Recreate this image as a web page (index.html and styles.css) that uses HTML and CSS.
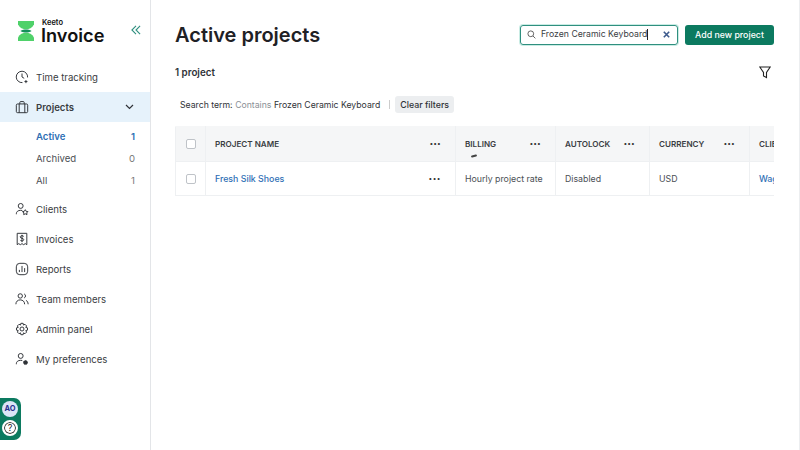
FILE: index.html
```html
<!DOCTYPE html>
<html lang="en">
<head>
  <meta charset="UTF-8" />
  <title>Active projects</title>
  <link rel="stylesheet" href="styles.css">
</head>
<body>

<div class="app">
  <aside class="sidebar">
    <div class="brand">
      <svg class="brand-mark" width="16" height="20" viewBox="0 0 17 20" preserveAspectRatio="none">
        <path d="M0 0h17v3.500C15 7 12 8.200 8.500 8.200S2 7 0 3.500z" fill="#4fd16a"/>
        <path d="M0 20h17v-3.500C15 13 12 11.800 8.500 11.800S2 13 0 16.500z" fill="#4fd16a"/>
        <path d="M2.500 10C4.500 8.800 6.500 8.400 8.500 8.400s4 .4 6 1.600c-2 1.200-4 1.600-6 1.600s-4-.4-6-1.600z" fill="#13905a"/>
      </svg>
      <div class="brand-text">
        <span class="brand-small">Keeto</span>
        <span class="brand-name">Invoice</span>
      </div>
      <svg class="collapse" width="10" height="10" viewBox="0 0 11 11" fill="none" stroke="#2f8f7f" stroke-width="1.200">
        <path d="M5.500 1 1 5.500 5.500 10M10 1 5.500 5.500 10 10"/>
      </svg>
    </div>

    <nav class="nav">
      <a class="nav-item">
        <svg class="nav-icon" viewBox="0 0 16 16"><path d="M8.500 14.400A6.500 6.500 0 1 1 14.400 8.500M8 4v4l2.500 1.500M12.500 11.500v3.500M10.800 13.200h3.400"/></svg>
        Time tracking
      </a>
      <a class="nav-item nav-open">
        <svg class="nav-icon" viewBox="0 0 16 16"><rect x="1.500" y="4.500" width="13" height="10" rx="1.500"/><path d="M5.500 4.500V2.800a1 1 0 0 1 1-1h3a1 1 0 0 1 1 1v1.700M4.800 4.500v10M11.200 4.500v10"/></svg>
        Projects
        <svg class="chevron" width="9" height="6" viewBox="0 0 9 6"><path d="M1 1l3.500 3.500L8 1"/></svg>
      </a>
      <div class="subnav">
        <a class="sub-item sub-active">Active <span>1</span></a>
        <a class="sub-item">Archived <span>0</span></a>
        <a class="sub-item">All <span>1</span></a>
      </div>
      <a class="nav-item">
        <svg class="nav-icon" viewBox="0 0 16 16"><circle cx="6.500" cy="4.500" r="2.800"/><path d="M1.500 14v-.5c0-2.500 2-4 5-4 .7 0 1.300.1 1.800.2M11.800 8.800l1 1.900 2 .3-1.400 1.400.3 2-1.900-.9-1.900.9.300-2L8.500 11l2-.3z"/></svg>
        Clients
      </a>
      <a class="nav-item">
        <svg class="nav-icon" viewBox="0 0 16 16"><path d="M2.500 1.500h11v13l-1.800-1.200-1.800 1.200L8 13.300l-1.900 1.200-1.800-1.200-1.800 1.200zM10 5.200C9.600 4.500 9 4.200 8 4.200c-1.200 0-2 .6-2 1.500 0 2 4 1 4 3 0 .9-.8 1.500-2 1.500-1 0-1.700-.4-2-1.100M8 3.200v8.400"/></svg>
        Invoices
      </a>
      <a class="nav-item">
        <svg class="nav-icon" viewBox="0 0 16 16"><rect x="1.500" y="1.500" width="13" height="13" rx="4"/><path d="M5 11.500V9M8 11.500v-7M11 11.500V7"/></svg>
        Reports
      </a>
      <a class="nav-item">
        <svg class="nav-icon" viewBox="0 0 16 16"><circle cx="6" cy="4.500" r="2.500"/><path d="M1 14c0-3 2-5 5-5s5 2 5 5M10.500 2.200a2.500 2.500 0 0 1 0 4.600M12.500 9.500c1.500.7 2.500 2.300 2.500 4.500"/></svg>
        Team members
      </a>
      <a class="nav-item">
        <svg class="nav-icon" viewBox="0 0 16 16"><circle cx="8" cy="8" r="2.300"/><path d="M6.700 1.500h2.600l.4 2 1.700-.9 1.900 1.900-1 1.700 2 .5v2.600l-2 .5 1 1.700-1.900 1.900-1.700-1-.4 2.100H6.700l-.4-2.100-1.700 1-1.900-1.900 1-1.700-2-.5V6.700l2-.5-1-1.700 1.900-1.900 1.700.9z"/></svg>
        Admin panel
      </a>
      <a class="nav-item">
        <svg class="nav-icon" viewBox="0 0 16 16"><circle cx="6.500" cy="4.500" r="2.800"/><path d="M1.500 14v-.5c0-2.500 2-4 5-4 .7 0 1.300.1 1.800.2"/><circle class="icon-fill" cx="12" cy="12" r="2.300"/></svg>
        My preferences
      </a>
    </nav>

    <div class="floating">
      <span class="avatar">AO</span>
      <span class="help">?</span>
    </div>
  </aside>

  <main class="main">
    <header class="page-head">
      <h1>Active projects</h1>
      <div class="search">
        <svg width="9" height="9" viewBox="0 0 10 10" fill="none" stroke="#555" stroke-width="1"><circle cx="4.200" cy="4.200" r="3.200"/><path d="M6.700 6.700 9.300 9.300"/></svg>
        <span class="search-value">Frozen Ceramic Keyboard</span>
        <svg class="search-clear" width="7" height="7" viewBox="0 0 7 7" fill="none" stroke="#3d5a8c" stroke-width="1.600"><path d="M.8.800l5.400 5.400M6.200.800.8 6.200"/></svg>
      </div>
      <button class="add-btn">Add new project</button>
    </header>

    <div class="sub-head">
      <span class="count">1 project</span>
      <svg width="12" height="13" viewBox="0 0 12 13" fill="none" stroke="#222" stroke-width="1.100"><path d="M.8 1h10.400L7.500 6.500v5L4.500 10V6.500z"/></svg>
    </div>

    <div class="filters">
      <span>Search term:</span>
      <span class="muted">Contains</span>
      <span>Frozen Ceramic Keyboard</span>
      <span class="divider"></span>
      <button class="clear-btn">Clear filters</button>
    </div>

    <div class="table-wrap">
      <table class="projects">
        <colgroup>
          <col class="col-check"><col class="col-name"><col class="col-billing"><col class="col-lock"><col class="col-currency"><col class="col-client">
        </colgroup>
        <thead>
          <tr>
            <th><span class="checkbox"></span></th>
            <th><div class="th-inner">PROJECT NAME <span class="dots">•••</span></div></th>
            <th><div class="th-inner">BILLING <span class="dots">•••</span></div><span class="sort-mark"></span></th>
            <th><div class="th-inner">AUTOLOCK <span class="dots">•••</span></div></th>
            <th><div class="th-inner">CURRENCY <span class="dots">•••</span></div></th>
            <th><div class="th-inner">CLIENT</div></th>
          </tr>
        </thead>
        <tbody>
          <tr>
            <td><span class="checkbox"></span></td>
            <td><div class="th-inner"><a class="link">Fresh Silk Shoes</a> <span class="dots">•••</span></div></td>
            <td>Hourly project rate</td>
            <td>Disabled</td>
            <td>USD</td>
            <td><a class="link">Wagner Group</a></td>
          </tr>
        </tbody>
      </table>
    </div>
  </main>
</div>

</body>
</html>
```

FILE: styles.css
```css
* {
  box-sizing: border-box;
}
html, body {
  margin: 0;
  height: 100%;
  overflow: hidden;
}
body {
  font-family: Inter, "Liberation Sans", sans-serif;
  font-size: 9.600px;
  color: #2f3237;
  background: #fff;
}
.app {
  display: flex;
  height: 450px;
  border-right: 1px solid #eceef0;
}

/* sidebar */
.sidebar {
  position: relative;
  width: 151px;
  flex-shrink: 0;
  border-right: 1px solid #e3e5e8;
}
.brand {
  display: flex;
  align-items: center;
  height: 34px;
  margin-top: 14px;
  padding: 0 9px 0 18px;
}
.brand-mark {
  flex-shrink: 0;
}
.brand-text {
  display: flex;
  flex-direction: column;
  margin-left: 7px;
  color: #111;
}
.brand-small {
  font-size: 7.500px;
  font-weight: 600;
  line-height: 8px;
  margin-left: 1px;
}
.brand-name {
  font-size: 18.200px;
  font-weight: 600;
  line-height: 17px;
}
.collapse {
  margin-left: auto;
  margin-top: -2px;
}
.nav {
  margin-top: 14px;
}
.nav-item {
  display: flex;
  align-items: center;
  gap: 7px;
  height: 30px;
  padding: 0 14px 0 15px;
  color: #3a3d42;
}
.nav-icon {
  width: 14px;
  height: 14px;
  fill: none;
  stroke: #2f3237;
  stroke-width: 1.100;
  flex-shrink: 0;
}
.nav-icon .icon-fill {
  fill: #2f3237;
  stroke-dasharray: 1.200 0.600;
}
.nav-open {
  background: #e6f2fb;
  font-weight: 600;
}
.chevron {
  margin-left: auto;
  fill: none;
  stroke: #2f3237;
  stroke-width: 1.200;
  margin-right: 2px;
}
.subnav {
  padding: 3px 0;
}
.sub-item {
  display: flex;
  justify-content: space-between;
  align-items: center;
  height: 22px;
  padding: 0 15px 0 36px;
  color: #4b4f55;
}
.sub-item span {
  color: #777;
}
.sub-active,
.sub-active span {
  color: #2f6fb5;
  font-weight: 600;
}
.floating {
  position: absolute;
  left: 0;
  top: 398px;
  width: 21px;
  height: 42px;
  padding: 3px 0 0 2px;
  background: #0c7a60;
  border-radius: 0 7px 7px 0;
  display: flex;
  flex-direction: column;
  gap: 3px;
}
.avatar {
  width: 16px;
  height: 16px;
  border-radius: 50%;
  background: #dbe4f7;
  color: #27308f;
  font-size: 7.500px;
  font-weight: 700;
  line-height: 16px;
  text-align: center;
}
.help {
  width: 16px;
  height: 16px;
  border-radius: 50%;
  background: #fff;
  color: #222;
  font-size: 9px;
  line-height: 12px;
  text-align: center;
  border: 2px solid #fff;
  box-shadow: inset 0 0 0 1px #333;
}

/* main area */
.main {
  flex: 1;
  min-width: 0;
  padding: 0 25px 0 24px;
}
.page-head {
  display: flex;
  align-items: center;
  height: 34px;
  margin-top: 18px;
  gap: 7px;
}
.page-head h1 {
  margin: 0 auto 0 0;
  font-size: 20px;
  font-weight: 600;
  color: #1f2125;
}
.search {
  display: flex;
  align-items: center;
  width: 158px;
  height: 20px;
  padding: 0 7px 0 6px;
  margin-top: -1px;
  border: 1px solid #2f8f7f;
  border-radius: 3px;
  box-shadow: 0 0 0 1px #c9ece4;
  color: #3a3d42;
}
.search svg {
  flex-shrink: 0;
}
.search-value {
  margin-left: 5px;
  font-size: 8.700px;
  white-space: nowrap;
  border-right: 1px solid #222;
  line-height: 11px;
}
.search-clear {
  margin-left: auto;
}
.add-btn {
  width: 89px;
  height: 20px;
  margin-top: -1px;
  border: none;
  border-radius: 3px;
  background: #0c7a60;
  color: #fff;
  font-family: inherit;
  font-size: 8.800px;
  font-weight: 500;
  padding: 0;
}
.sub-head {
  display: flex;
  justify-content: space-between;
  align-items: center;
  height: 20px;
  margin-top: 10px;
  padding-right: 3px;
}
.count {
  font-weight: 600;
  font-size: 9.800px;
}
.filters {
  display: flex;
  align-items: center;
  gap: 2.500px;
  height: 17px;
  margin-top: 14px;
  padding-left: 5px;
  font-size: 8.700px;
}
.muted {
  color: #8b8f95;
}
.divider {
  width: 1px;
  height: 9px;
  background: #ccc;
  margin: 0 3px 0 6px;
}
.clear-btn {
  height: 17px;
  padding: 0 5px;
  border: none;
  border-radius: 3px;
  background: #eceef0;
  color: #2f3237;
  font-family: inherit;
  font-size: 8.800px;
  font-weight: 500;
}

/* table */
.table-wrap {
  margin-top: 13px;
  width: 599px;
  overflow: hidden;
}
.projects {
  border-collapse: collapse;
  table-layout: fixed;
  width: 680px;
  font-size: 8.800px;
}
.col-check { width: 30px; }
.col-name { width: 250px; }
.col-billing { width: 100px; }
.col-lock { width: 94px; }
.col-currency { width: 100px; }
.col-client { width: 106px; }
.projects th,
.projects td {
  border: 1px solid #eef0f2;
  padding: 0 10px 0 9px;
  text-align: left;
  white-space: nowrap;
}
.projects th {
  position: relative;
  height: 35px;
  background: #f5f6f7;
  font-size: 8.100px;
  font-weight: 600;
  color: #3a3d42;
}
.projects td {
  height: 34px;
  color: #4b4f55;
}
.projects th:first-child,
.projects td:first-child {
  padding: 0 0 0 10px;
}
.projects thead tr th {
  border-top-color: #f5f6f7;
}
.th-inner {
  display: flex;
  justify-content: space-between;
  align-items: center;
}
.dots {
  font-size: 6.500px;
  letter-spacing: 0.500px;
  color: #333;
  margin-right: 4px;
}
.sort-mark {
  position: absolute;
  left: 15px;
  top: 28px;
  width: 6px;
  height: 2px;
  background: #444;
  border-radius: 1px;
  transform: rotate(-15deg);
}
.checkbox {
  display: block;
  width: 10px;
  height: 10px;
  border: 1px solid #bfc3c8;
  border-radius: 2px;
  background: #fff;
}
.link {
  color: #2f6fb5;
  font-weight: 500;
}
```
